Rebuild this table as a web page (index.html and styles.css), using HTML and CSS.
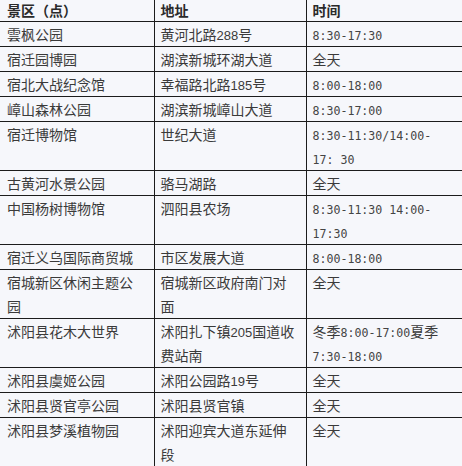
FILE: index.html
```html
<!DOCTYPE html>
<html lang="zh-CN">
<head>
<meta charset="utf-8">
<title>景区（点）</title>
<link rel="stylesheet" href="styles.css">
</head>
<body>
<table class="sites">
  <colgroup>
    <col class="c1">
    <col class="c2">
    <col class="c3">
  </colgroup>
  <thead>
    <tr><th>景区（点）</th><th>地址</th><th>时间</th></tr>
  </thead>
  <tbody>
    <tr><td>雲枫公园</td><td>黄河北路<span class="n">288</span>号</td><td><span class="t">8:30-17:30</span></td></tr>
    <tr><td>宿迁园博园</td><td>湖滨新城环湖大道</td><td>全天</td></tr>
    <tr><td>宿北大战纪念馆</td><td>幸福路北路<span class="n">185</span>号</td><td><span class="t">8:00-18:00</span></td></tr>
    <tr><td>嶂山森林公园</td><td>湖滨新城嶂山大道</td><td><span class="t">8:30-17:00</span></td></tr>
    <tr><td>宿迁博物馆</td><td>世纪大道</td><td><span class="t">8:30-11:30/14:00-<br>17: 30</span></td></tr>
    <tr><td>古黄河水景公园</td><td>骆马湖路</td><td>全天</td></tr>
    <tr><td>中国杨树博物馆</td><td>泗阳县农场</td><td><span class="t">8:30-11:30 14:00-<br>17:30</span></td></tr>
    <tr><td>宿迁义乌国际商贸城</td><td>市区发展大道</td><td><span class="t">8:00-18:00</span></td></tr>
    <tr><td>宿城新区休闲主题公<br>园</td><td>宿城新区政府南门对<br>面</td><td>全天</td></tr>
    <tr><td>沭阳县花木大世界</td><td>沭阳扎下镇<span class="n">205</span>国道收<br>费站南</td><td>冬季<span class="t">8:00-17:00</span>夏季<br><span class="t">7:30-18:00</span></td></tr>
    <tr><td>沭阳县虞姬公园</td><td>沭阳公园路<span class="n">19</span>号</td><td>全天</td></tr>
    <tr><td>沭阳县贤官亭公园</td><td>沭阳县贤官镇</td><td>全天</td></tr>
    <tr><td>沭阳县梦溪植物园</td><td>沭阳迎宾大道东延伸<br>段</td><td>全天</td></tr>
  </tbody>
</table>
</body>
</html>
```

FILE: styles.css
```css
html, body {
  margin: 0;
  padding: 0;
  background: #f6f7fb;
}

body {
  width: 462px;
  height: 466px;
  overflow: hidden;
  font-family: "Noto Sans CJK SC", "Liberation Sans", sans-serif;
  font-size: 14px;
  color: #3a3a3a;
}

.sites {
  width: 462px;
  border-collapse: collapse;
  table-layout: fixed;
}

.c1 { width: 154px; }
.c2 { width: 152px; }
.c3 { width: 156px; }

.sites th,
.sites td {
  padding: 0 4px 0 6px;
  text-align: left;
  vertical-align: top;
  line-height: 24px;
  border-bottom: 1px solid #1c1c1c;
  border-left: 1px solid #1c1c1c;
  white-space: nowrap;
}

.sites th:first-child,
.sites td:first-child {
  border-left: none;
  padding-left: 7px;
}

.sites th {
  height: 21px;
  line-height: 21px;
  font-weight: bold;
  color: #2a2a2a;
}

.n {
  font-family: "Liberation Sans", sans-serif;
  font-size: 13px;
  line-height: 1;
}

.t {
  font-family: "DejaVu Sans Mono", monospace;
  font-size: 11.6px;
  line-height: 1;
  color: #444;
}
```
